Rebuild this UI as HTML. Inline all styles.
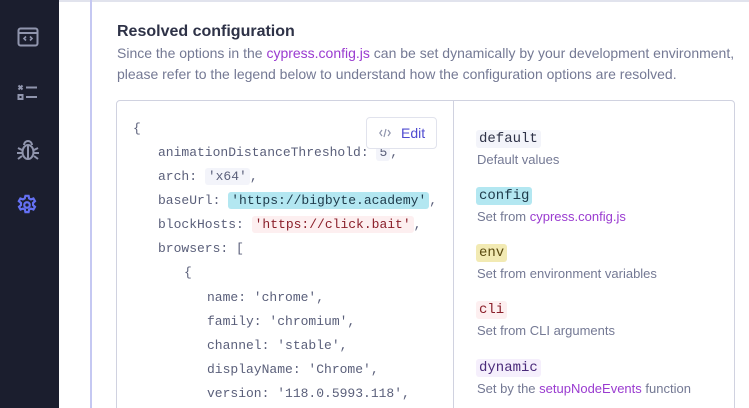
<!DOCTYPE html>
<html style="width:749px;height:408px;overflow:hidden"><head><meta charset="utf-8"><style>
body{margin:0;width:749px;height:408px;overflow:hidden;background:#fff;font-family:"Liberation Sans",sans-serif;position:relative}
.side{position:absolute;left:0;top:0;width:59px;height:408px;background:#1b1e2e}
.topline{position:absolute;left:59px;top:0;right:0;height:2px;background:#e1e3ed}
.vline{position:absolute;left:90px;top:0;width:2px;height:408px;background:#c5c8f2}
.ab{position:absolute;white-space:nowrap}
h1{position:absolute;left:117px;top:23px;margin:0;font-size:16px;font-weight:bold;color:#2e3247}
.p{color:#747994;font-size:14px}
.lnk{color:#9a3bd0}
.box{position:absolute;left:116px;top:100px;width:617px;height:320px;border:1px solid #d0d2e0;border-radius:4px}
.div{position:absolute;left:453px;top:100px;width:1px;height:308px;background:#d0d2e0}
.c{position:absolute;white-space:nowrap;font-family:"Liberation Mono",monospace;font-size:13px;color:#5a5f7a;line-height:20px}
.tg{padding:1px 3px;border-radius:3px}
.edit{position:absolute;left:366px;top:117px;width:69px;height:30px;border:1px solid #e1e3ed;border-radius:4px;background:#fff;font-size:14px;color:#4f4bd0}
.lg{position:absolute;left:477px;white-space:nowrap}
.lg .t{font-family:"Liberation Mono",monospace;font-size:14px;padding:1px 3px;border-radius:3px;margin-left:-1px}
.lg .d{font-size:13px;color:#747994;margin-top:5px}
</style></head><body>
<div class="side">
<svg style="position:absolute;left:17px;top:27px" width="22" height="20" viewBox="0 0 22 20" fill="none" stroke="#9095ad" stroke-width="2"><rect x="1.5" y="1.5" width="19" height="17" rx="2"/><line x1="1.5" y1="6" x2="20.5" y2="6"/><path d="M9 9.5l-2 2 2 2M13 9.5l2 2-2 2" stroke-width="1.6"/></svg>
<svg style="position:absolute;left:17px;top:84px" width="22" height="18" viewBox="0 0 22 18" fill="none" stroke="#9095ad" stroke-width="2"><path d="M1.5 1.5l4 4M5.5 1.5l-4 4"/><rect x="1.5" y="11" width="4" height="4"/><line x1="9" y1="3.5" x2="20" y2="3.5"/><line x1="9" y1="13" x2="20" y2="13"/></svg>
<svg style="position:absolute;left:16px;top:139px" width="24" height="22" viewBox="0 0 24 22" fill="none" stroke="#9095ad" stroke-width="2"><ellipse cx="12" cy="13" rx="5.5" ry="7"/><path d="M8 6a4 4 0 0 1 8 0M12 7v13M2 9l4 2M22 9l-4 2M1 14h5M23 14h-5M2 20l4-3M22 20l-4-3"/></svg>
<svg style="position:absolute;left:16px;top:194px" width="22" height="22" viewBox="0 0 24 24" fill="none" stroke="#6470f3" stroke-width="2.4"><path d="M10.3 2h3.4l.6 2.8 2 1.1 2.7-1 1.7 2.9-2.1 1.9v2.4l2.1 1.9-1.7 2.9-2.7-1-2 1.1-.6 2.8h-3.4l-.6-2.8-2-1.1-2.7 1-1.7-2.9 2.1-1.9v-2.4L3.1 7.8l1.7-2.9 2.7 1 2-1.1z"/><circle cx="12" cy="12" r="3"/></svg>
</div>
<div class="topline"></div>
<div class="vline"></div>
<h1>Resolved configuration</h1>
<div class="ab p" style="left:117px;top:45px">Since the options in the <span class="lnk">cypress.config.js</span> can be set dynamically by your development environment,</div>
<div class="ab p" style="left:117px;top:66px">please refer to the legend below to understand how the configuration options are resolved.</div>
<div class="box"></div>
<div class="div"></div>
<div class="c" style="left:133px;top:119px">{</div>
<div class="c" style="left:158px;top:143px">animationDistanceThreshold: <span class="tg" style="background:#f3f4fa">5</span>,</div>
<div class="c" style="left:158px;top:167px">arch: <span class="tg" style="background:#f3f4fa">'x64'</span>,</div>
<div class="c" style="left:158px;top:191px">baseUrl: <span class="tg" style="background:#b3e7f1;color:#1e3a4a">'https://bigbyte.academy'</span>,</div>
<div class="c" style="left:158px;top:215px">blockHosts: <span class="tg" style="background:#fdeff0;color:#8a1f2a">'https://click.bait'</span>,</div>
<div class="c" style="left:158px;top:239px">browsers: [</div>
<div class="c" style="left:184px;top:263px">{</div>
<div class="c" style="left:207px;top:288px">name:  'chrome',</div>
<div class="c" style="left:207px;top:312px">family:  'chromium',</div>
<div class="c" style="left:207px;top:336px">channel:  'stable',</div>
<div class="c" style="left:207px;top:360px">displayName:  'Chrome',</div>
<div class="c" style="left:207px;top:384px">version:  '118.0.5993.118',</div>
<div class="edit"><svg style="position:absolute;left:12px;top:10px" width="12" height="10" viewBox="0 0 12 10" fill="none" stroke="#9095ad" stroke-width="1.2"><path d="M3 2L0.8 5 3 8M9 2l2.2 3L9 8M7 1L5 9"/></svg><span style="position:absolute;left:34px;top:7px">Edit</span></div>
<div class="lg" style="top:129px"><span class="t" style="background:#f3f4fa;color:#2e3247">default</span><div class="d">Default values</div></div>
<div class="lg" style="top:186px"><span class="t" style="background:#b3e7f1;color:#1e3a4a">config</span><div class="d">Set from <span class="lnk">cypress.config.js</span></div></div>
<div class="lg" style="top:243px"><span class="t" style="background:#f2eab3;color:#5a4a10">env</span><div class="d">Set from environment variables</div></div>
<div class="lg" style="top:300px"><span class="t" style="background:#fdeff0;color:#8a1f2a">cli</span><div class="d">Set from CLI arguments</div></div>
<div class="lg" style="top:358px"><span class="t" style="background:#f5effc;color:#4a2a7a">dynamic</span><div class="d">Set by the <span class="lnk">setupNodeEvents</span> function</div></div>
</body></html>
